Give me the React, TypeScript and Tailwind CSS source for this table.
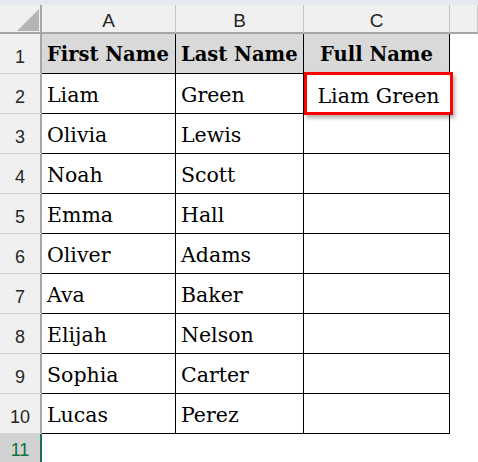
import React from "react";

const rows: [string, string, string][] = [
  ["Liam", "Green", "Liam Green"],
  ["Olivia", "Lewis", ""],
  ["Noah", "Scott", ""],
  ["Emma", "Hall", ""],
  ["Oliver", "Adams", ""],
  ["Ava", "Baker", ""],
  ["Elijah", "Nelson", ""],
  ["Sophia", "Carter", ""],
  ["Lucas", "Perez", ""],
];

const cell = "flex items-end pb-[7px] border-r border-b border-black text-[20.5px] leading-[22px] text-black font-['DejaVu_Serif','Liberation_Serif',serif]";
const headCell = "flex items-end pb-[7px] bg-[#d9d9d9] border-r border-b border-black text-[19.5px] leading-[22px] font-bold text-black font-['DejaVu_Serif','Liberation_Serif',serif]";

const RowHead = ({n, active}: {n: number, active?: boolean}) => (
  <div
    className={
      active
        ? "flex items-end justify-center pb-[2px] bg-[#d2d2d2] text-[#0f703b] border-r-2 border-[#1e7145] text-[18px] leading-[20px] font-['Liberation_Sans',Arial,sans-serif]"
        : "flex items-end justify-center pb-[6px] bg-[#f0f0f0] text-[#262626] border-r-2 border-b border-r-[#a6a6a6] border-b-[#d4d4d4] text-[18px] leading-[20px] font-['Liberation_Sans',Arial,sans-serif]"
    }
  >
    {n}
  </div>
);

export default function App() {
  return (
    <div className="w-[478px] h-[462px] overflow-hidden bg-white">
      <div className="h-[5px] bg-[#e6e9ed]" />
      <div className="grid grid-cols-[42px_134px_128px_146px_1fr] grid-rows-[29px_repeat(10,40px)_28px]">
        {/* column headers */}
        <div className="relative bg-[#f0f0f0] border-b-2 border-r-2 border-[#a6a6a6]">
          <div className="absolute left-[17px] top-[4px] w-0 h-0 border-l-[22px] border-l-transparent border-b-[22px] border-b-[#b4b4b4]" />
        </div>
        {["A", "B", "C", ""].map((c, i) => (
          <div
            key={i}
            className="flex items-end justify-center pb-[1px] bg-[#f0f0f0] border-b-2 border-b-[#a6a6a6] border-r border-r-[#c6c6c6] text-[19px] leading-[20px] text-[#262626] font-['Liberation_Sans',Arial,sans-serif]"
          >
            {c}
          </div>
        ))}

        {/* row 1 */}
        <RowHead n={1} />
        <div className={`${headCell} pl-[5px]`}>First Name</div>
        <div className={`${headCell} pl-[5px]`}>Last Name</div>
        <div className={`${headCell} justify-center`}>Full Name</div>
        <div />

        {rows.map((r, i) => (
          <React.Fragment key={i}>
            <RowHead n={i + 2} />
            <div className={`${cell} pl-[5px]`}>{r[0]}</div>
            <div className={`${cell} pl-[5px]`}>{r[1]}</div>
            <div className="relative border-r border-b border-black">
              {r[2] && (
                <div className="absolute left-0 -top-[2px] w-[149px] h-[43px] border-[3px] border-[#ff0000] bg-white shadow-[2px_3px_4px_rgba(0,0,0,0.3)] flex items-end justify-center pb-[5px] text-[20.5px] leading-[22px] text-black font-['DejaVu_Serif','Liberation_Serif',serif]">
                  {r[2]}
                </div>
              )}
            </div>
            <div />
          </React.Fragment>
        ))}

        <RowHead n={11} active />
        <div />
        <div />
        <div />
        <div />
      </div>
    </div>
  );
}
